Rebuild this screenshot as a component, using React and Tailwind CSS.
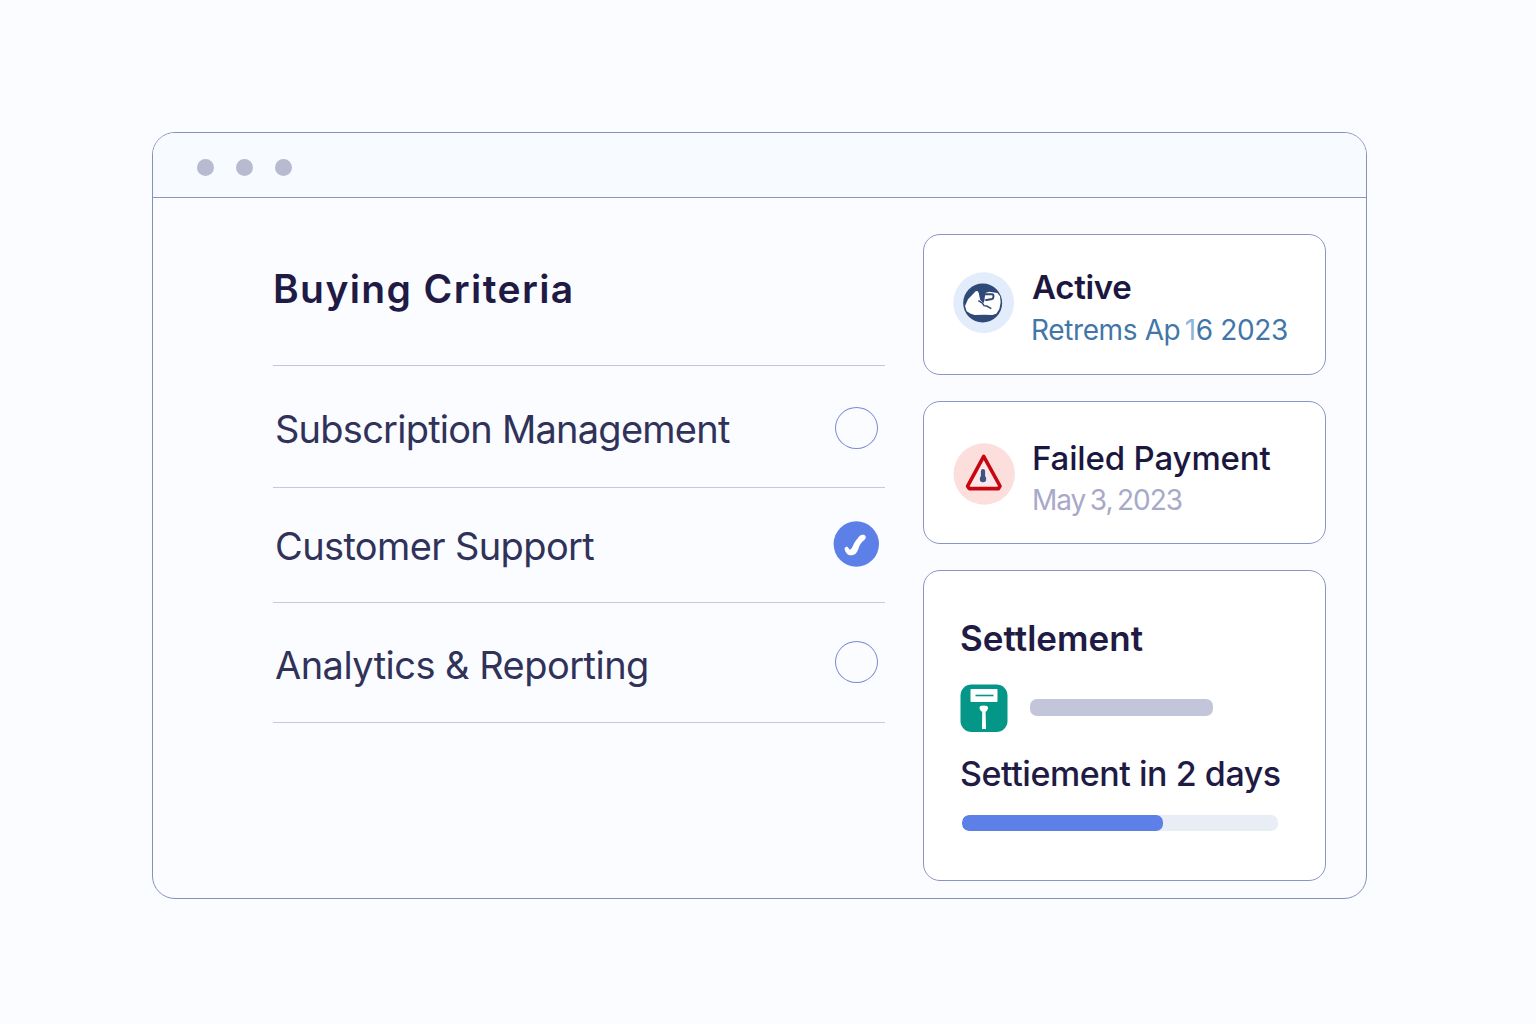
const criteria = [
  { label: 'Subscription Management', row: 'h-[122px]', text: 'pt-[38px] tracking-[-0.76px]', mark: 'pt-[41px]' },
  { label: 'Customer Support', row: 'h-[115px]', text: 'pt-[33px] tracking-[-0.62px]', mark: 'pt-[33px]', checked: true },
  { label: 'Analytics & Reporting', row: 'h-[120px]', text: 'pt-[37px] tracking-[-0.53px]', mark: 'pt-[38px]' },
];

function Mark({ checked }) {
  if (!checked) {
    return <div className="mr-[7px] h-[42px] w-[43px] rounded-[50%] border border-[#7b88d6]" />;
  }
  return (
    <svg className="mr-[6px] size-[46px]" viewBox="0 0 46 46" fill="none">
      <circle cx="23.300" cy="23" r="22.700" fill="#5d80e8" />
      <path
        d="M11.800 27c.8-1.600 2.800-1.700 3.600 0 .6 1.400 1.500 2 2.600 1 1.500-1.600 2.200-4.300 3.600-6.600 1.300-2.200 2.600-3 3.700-4.900 1.200-2.100 3.200-3.300 5.500-2.700 2.200.6 2.600 2.900 1.200 4.500-1.600 1.800-3.300 2.600-4.700 5-1.500 2.500-2 6.500-4.500 9.200-2.200 2.300-6.800 2.500-8.800.2-1.500-1.700-3-4.100-2.200-5.700z"
        fill="#fff"
      />
    </svg>
  );
}

function ActiveIcon() {
  return (
    <svg className="size-[62px] shrink-0" viewBox="30 30 186 186">
      <circle cx="122" cy="122" r="91" fill="#e2ecfb" />
      <circle cx="119" cy="123" r="58.500" fill="#2f4a78" />
      <path
        d="M75 112 88 98l10-10 6-1 6 12 1 12 7 9 6-3 3-24 12-4 24 4 8 10 2 18-4 20-9 14-12 4-25-1-28 1-12-4-12-7-5-16z"
        fill="#fff"
      />
      <path d="M121 97h26c6 0 6 12 0 14l-20 4" fill="none" stroke="#2f4a78" strokeWidth="6" strokeLinejoin="round" />
      <path d="M106 116l12 7 5 8 8 1 14 8" fill="none" stroke="#2f4a78" strokeWidth="4.500" />
      <path d="M108 96l14-3-4 18 6 4-2 8-10-9z" fill="#2f4a78" />
    </svg>
  );
}

function FailedIcon() {
  return (
    <svg className="size-[62px] shrink-0" viewBox="0 0 62 62">
      <circle cx="31.200" cy="31" r="30.700" fill="#fcdedd" />
      <path d="M30.700 13.300 14.600 43.200l1.600 2.400h29.300l1.500-2.600z" fill="#fbe6e8" stroke="#c8060f" strokeWidth="3.600" strokeLinejoin="round" />
      <path d="M30 28v9" stroke="#3e5384" strokeWidth="4.200" strokeLinecap="round" />
      <circle cx="30" cy="36" r="3.200" fill="#3e5384" />
    </svg>
  );
}

function SettlementIcon() {
  return (
    <svg className="size-[48px] shrink-0" viewBox="0 0 48 48">
      <rect x="0.500" y="0.500" width="47" height="47.500" rx="11" fill="#049687" />
      <rect x="10.500" y="5" width="27" height="13" rx="0.800" fill="#fff" />
      <path d="M15.500 11.500h18" stroke="#049687" strokeWidth="1.600" />
      <path d="M19.500 24c0-1.800 1.500-2.500 4.300-2.500s4.200.7 4.200 2.500c0 2-1.400 3-2.400 3.800l.4 17.200h-4l.2-17.200c-1.200-.8-2.700-1.800-2.700-3.800z" fill="#fff" />
    </svg>
  );
}

export default function App() {
  return (
    <div className="h-[1024px] w-[1536px] bg-[#fbfcff] pt-[132px] pl-[152px] font-['Inter',sans-serif] whitespace-nowrap">
      <div className="flex h-[767px] w-[1215px] flex-col overflow-hidden rounded-[23px] border border-[#8491bd] bg-[#fbfcff]">
        <div className="flex h-[65px] shrink-0 items-center gap-[22px] border-b border-[#8d96b9] bg-[#f7fafe] pt-[5px] pl-[44px]">
          <span className="size-[17px] rounded-full bg-[#b8bad0]" />
          <span className="size-[17px] rounded-full bg-[#b8bad0]" />
          <span className="size-[17px] rounded-full bg-[#b8bad0]" />
        </div>

        <div className="flex flex-1">
          <div className="ml-[120px] w-[612px]">
            <h1 className="h-[168px] border-b border-[#c3c4dc] pt-[66px] text-[39px] leading-[50px] font-semibold tracking-[1.4px] text-[#1f1b45]">
              Buying Criteria
            </h1>
            {criteria.map(c => (
              <div key={c.label} className={`flex justify-between border-b border-[#c6c8e0] pl-[2px] ${c.row}`}>
                <div className={`text-[38px] leading-[50px] text-[#30325a] ${c.text}`}>{c.label}</div>
                <div className={c.mark}>
                  <Mark checked={c.checked} />
                </div>
              </div>
            ))}
          </div>

          <div className="ml-[38px] flex w-[403px] flex-col gap-[26px] pt-[36px]">
            <div className="flex h-[141px] rounded-[17px] border border-[#8b94c6] bg-white pt-[37px] pl-[29px]">
              <ActiveIcon />
              <div className="pl-[17px]">
                <div className="-mt-[5px] text-[33px] leading-[40px] font-semibold tracking-[-0.3px] text-[#1b173f]">Active</div>
                <div className="mt-[6px] -ml-[1px] text-[28px] leading-[34px] tracking-[-0.38px] text-[#4376a8]">
                  Retrems Ap <span className="-ml-[3px] text-[#8db4dc]">1</span>6 2023
                </div>
              </div>
            </div>

            <div className="flex h-[143px] rounded-[17px] border border-[#8b94c6] bg-white pt-[41px] pl-[29px]">
              <FailedIcon />
              <div className="pl-[17px]">
                <div className="-mt-[5px] text-[33px] leading-[40px] font-medium tracking-[-0.15px] text-[#1b173f]">Failed Payment</div>
                <div className="mt-[5px] text-[28px] leading-[34px] tracking-[-1.1px] [word-spacing:-2px] text-[#a8a9c9]">May 3, 2023</div>
              </div>
            </div>

            <div className="h-[311px] rounded-[17px] border border-[#8b94c6] bg-white pt-[46px] pl-[36px]">
              <div className="text-[35px] leading-[42px] font-semibold text-[#1f1b45]">Settlement</div>
              <div className="mt-[25px] flex">
                <SettlementIcon />
                <div className="mt-[15px] ml-[22px] h-[17px] w-[183px] rounded-[7px] bg-[#c3c5da]" />
              </div>
              <div className="mt-[21px] text-[34px] leading-[42px] font-medium tracking-[-0.45px] text-[#1f1b45]">Settiement in 2 days</div>
              <div className="mt-[20px] ml-[2px] h-[16px] w-[316px] overflow-hidden rounded-[7px] bg-[#e9edf5]">
                <div className="h-full w-[201px] rounded-[7px] bg-[#5d80e8]" />
              </div>
            </div>
          </div>
        </div>
      </div>
    </div>
  );
}
